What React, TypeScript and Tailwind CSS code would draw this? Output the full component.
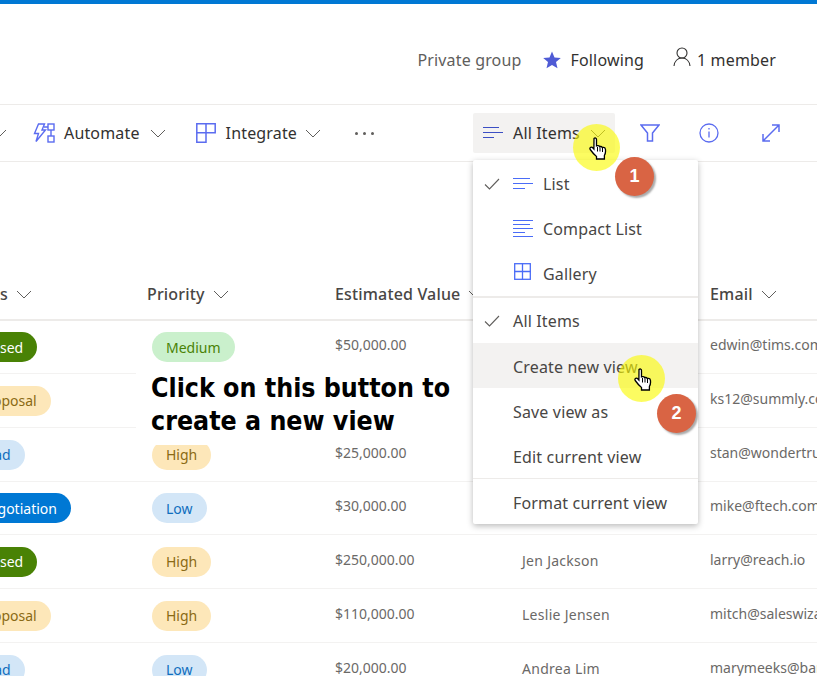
const Chev = ({ className = "" }: { className?: string }) => (
  <svg width="16" height="9" viewBox="0 0 16 9" fill="none" className={`shrink-0 ${className}`}>
    <path d="M1 1l7 7 7-7" stroke="#605e5c" strokeWidth="1" />
  </svg>
);

const Hand = () => (
  <svg width="19" height="24" viewBox="0 0 19 24">
    <path
      d="M5 1.500c1-1 2.500-.5 2.500 1V9l1-.3c.8-.2 1.500 0 1.800.5l.2.4.7-.2c.8-.2 1.500.1 1.800.7l.2.4.7-.1c1.200-.2 2.300.6 2.500 1.800.4 2.500.1 4.500-1 6.300v3.500H7.500v-2.500C5.500 18 3 15 1.200 12.500c-.6-1-.2-1.900.5-2.200.8-.3 1.700 0 2.300.7l.9 1z"
      fill="#fff"
      stroke="#000"
      strokeWidth="1.300"
    />
    <path d="M8.500 10v4.500M11 10v4.500M13.500 11v4" stroke="#000" strokeWidth="1" />
  </svg>
);

const Badge = ({ n, className }: { n: string; className: string }) => (
  <div
    className={`absolute w-[39px] h-[39px] rounded-full bg-[#d96444] text-white flex items-center justify-center font-bold text-[18px] shadow-[2px_2px_2px_#aaa] font-['Liberation_Sans',sans-serif] ${className}`}
  >
    {n}
  </div>
);

const pillStyles: Record<string, string> = {
  Closed: "bg-[#498205] text-white",
  Proposal: "bg-[#fde7b9] text-[#8a6a14]",
  Lead: "bg-[#d3e6f7] text-[#106ebe]",
  Negotiation: "bg-[#0078d4] text-white",
  High: "bg-[#fde7b9] text-[#8a6a14]",
  Medium: "bg-[#caf0cc] text-[#498205]",
  Low: "bg-[#d3e6f7] text-[#106ebe]",
};

const rows = [
  { h: "h-[53px]", s: "Closed", p: "Medium", v: "$50,000.00", n: "", e: "edwin@tims.com" },
  { h: "h-[54px]", s: "Proposal", p: "", v: "", n: "", e: "ks12@summly.com" },
  { h: "h-[54px]", s: "Lead", p: "High", v: "$25,000.00", n: "", e: "stan@wondertrust.com" },
  { h: "h-[53px]", s: "Negotiation", p: "Low", v: "$30,000.00", n: "", e: "mike@ftech.com" },
  { h: "h-[54px]", s: "Closed", p: "High", v: "$250,000.00", n: "Jen Jackson", e: "larry@reach.io" },
  { h: "h-[54px]", s: "Proposal", p: "High", v: "$110,000.00", n: "Leslie Jensen", e: "mitch@saleswizard.com" },
  { h: "h-[54px]", s: "Lead", p: "Low", v: "$20,000.00", n: "Andrea Lim", e: "marymeeks@bank.com" },
];

const Pill = ({ t, className = "" }: { t: string; className?: string }) => (
  <span className={`inline-flex h-[30px] items-center rounded-full px-[14px] text-[14px] whitespace-nowrap ${pillStyles[t]} ${className}`}>
    {t}
  </span>
);

const MenuIconList = () => (
  <svg width="21" height="12" viewBox="0 0 21 12" stroke="#4a6cf7" strokeWidth="1">
    <path d="M0 .5h17M0 5.500h20M0 10.500h12" />
  </svg>
);

const MenuIconCompact = () => (
  <svg width="21" height="18" viewBox="0 0 21 18" stroke="#4a6cf7" strokeWidth="1">
    <path d="M0 .5h20M0 4.500h17M0 8.500h20M0 12.500h12M0 16.500h20" />
  </svg>
);

const MenuIconGallery = () => (
  <svg width="19" height="17" viewBox="0 0 19 17" fill="none" stroke="#4a6cf7" strokeWidth="1.300" className="-mt-[4px]">
    <rect x="1.700" y=".7" width="15.600" height="15.600" />
    <path d="M9.500 0v17M1 8.500h17" />
  </svg>
);

const Check = () => (
  <svg width="16" height="12" viewBox="0 0 16 12" fill="none" stroke="#605e5c" strokeWidth="1.100">
    <path d="M1 6.500l4.500 4.500L15 1" />
  </svg>
);

const MenuItem = ({
  label,
  check,
  icon,
  hover,
  low,
}: {
  label: string;
  check?: boolean;
  icon?: React.ReactNode;
  hover?: boolean;
  low?: boolean;
}) => (
  <div className={`h-[45px] flex items-center text-[16px] tracking-[0.01em] text-[#484644] ${hover ? "bg-[#f3f2f1]" : ""} ${low ? "pt-[2px]" : ""}`}>
    <div className="w-[40px] flex justify-center pr-[3px] shrink-0">{check ? <Check /> : null}</div>
    {icon ? <div className="w-[30px] shrink-0 flex">{icon}</div> : null}
    <span className="whitespace-nowrap">{label}</span>
  </div>
);

export default function App() {
  return (
    <div className="relative w-[817px] h-[676px] overflow-hidden bg-white font-['Noto_Sans',sans-serif] text-[#323130]">
      <div className="h-[4px] bg-[#0078d4]" />
      <div className="h-[101px] flex items-center justify-end pr-[41px] border-b border-[#edebe9] pt-[11px] text-[16px] tracking-[0.01em]">
        <span className="text-[#605e5c]">Private group</span>
        <svg width="18" height="18" viewBox="0 0 18 18" className="ml-[21px] mr-[10px]">
          <path d="M9 .5l2.500 5.900 6.300.5-4.800 4.200 1.500 6.200L9 14.100l-5.500 3.200L5 11.100.2 6.900l6.300-.5z" fill="#4f5bd5" />
        </svg>
        <span>Following</span>
        <svg width="18" height="20" viewBox="0 0 18 20" fill="none" stroke="#323130" strokeWidth="1.100" className="ml-[29px] mr-[6px] -mt-[5px]">
          <circle cx="9" cy="6" r="5" />
          <path d="M1 19c.5-4.500 3.500-8 8-8s7.500 3.500 8 8" />
        </svg>
        <span>1 member</span>
      </div>

      <div className="h-[57px] border-b border-[#edebe9] flex items-center text-[16px] tracking-[0.01em] pr-[36px]">
        <Chev className="ml-[-9px] mr-[26px]" />
        <svg width="22" height="20" viewBox="0 0 22 20" fill="none" stroke="#5b6cf0" strokeWidth="1.400" className="mr-[9px] shrink-0">
          <path d="M5.500 1h6L9 7h3.500L3 18.500 5.500 10.500H1.500z" />
          <rect x="15" y="1" width="6" height="6" />
          <rect x="15" y="13" width="6" height="6" />
          <path d="M18 7v6M11 4h4" />
        </svg>
        <span>Automate</span>
        <Chev className="ml-[10px] mr-[30px]" />
        <svg width="20" height="20" viewBox="0 0 20 20" fill="none" stroke="#5b6cf0" strokeWidth="1.500" className="mr-[10px] shrink-0">
          <path d="M.8.800h18.400v9H10v9.400H.8z" />
          <path d="M10 .8v9M.8 9.800H10" />
        </svg>
        <span>Integrate</span>
        <Chev className="ml-[8px] mr-[34px]" />
        <span className="flex gap-[5px] items-center w-[21px]">
          <i className="w-[3px] h-[3px] rounded-full bg-[#605e5c]" />
          <i className="w-[3px] h-[3px] rounded-full bg-[#605e5c]" />
          <i className="w-[3px] h-[3px] rounded-full bg-[#605e5c]" />
        </span>
        <div className="ml-auto w-[142px] h-[40px] bg-[#f3f2f1] rounded-[2px] flex items-center pl-[10px] shrink-0">
          <svg width="21" height="12" viewBox="0 0 21 12" stroke="#3b4fc4" strokeWidth="1" className="mr-[9px] shrink-0">
            <path d="M0 .5h16M0 5.500h20M0 10.500h11" />
          </svg>
          <span className="whitespace-nowrap">All Items</span>
          <Chev className="ml-[10px]" />
        </div>
        <svg width="20" height="18" viewBox="0 0 20 18" fill="none" stroke="#5b6cf0" strokeWidth="1.500" className="ml-[25px] shrink-0">
          <path d="M1 1h18l-6.500 8v8h-5V9z" />
        </svg>
        <svg width="20" height="20" viewBox="0 0 20 20" fill="none" stroke="#5b6cf0" strokeWidth="1.300" className="ml-[39px] shrink-0">
          <circle cx="10" cy="10" r="9" />
          <path d="M10 8.500v6M10 5v1.500" />
        </svg>
        <svg width="20" height="20" viewBox="0 0 20 20" fill="none" stroke="#5b6cf0" strokeWidth="1.500" className="ml-[42px] shrink-0">
          <path d="M2 18L18 2M11 2h7v7M2 11v7h7" />
        </svg>
      </div>

      <div className="h-[108px]" />

      <div className="h-[51px] border-b-2 border-[#edebe9] flex items-center pb-[1px] text-[16px] tracking-[0.01em] text-[#484644] font-medium">
        <div className="w-[147px] shrink-0 flex items-center justify-end pr-[115px]">
          <span>s</span>
          <Chev className="ml-[8px]" />
        </div>
        <div className="w-[188px] shrink-0 flex items-center">
          <span>Priority</span>
          <Chev className="ml-[8px]" />
        </div>
        <div className="w-[187px] shrink-0 flex items-center">
          <span className="whitespace-nowrap">Estimated Value</span>
          <Chev className="ml-[8px]" />
        </div>
        <div className="w-[188px] shrink-0" />
        <div className="flex items-center">
          <span>Email</span>
          <Chev className="ml-[8px]" />
        </div>
      </div>

      {rows.map((r, i) => (
        <div key={i} className={`${r.h} border-b border-[#f3f2f1] flex items-center text-[14px] text-[#6b6967]`}>
          <div className="w-[147px] shrink-0 overflow-hidden">
            <Pill t={r.s} className="ml-[-35px]" />
          </div>
          <div className="w-[188px] shrink-0 pl-[5px]">{r.p ? <Pill t={r.p} /> : null}</div>
          <div className="w-[187px] shrink-0 -mt-[5px]">{r.v}</div>
          <div className="w-[188px] shrink-0 -mt-[3px] whitespace-nowrap tracking-[0.02em]">{r.n}</div>
          <div className="whitespace-nowrap -mt-[5px]">{r.e}</div>
        </div>
      ))}

      {/* annotation */}
      <div className="absolute left-[136px] top-[368px] w-[340px] h-[77px] bg-white pl-[15px] pt-[3px] font-['DejaVu_Sans_Condensed','DejaVu_Sans',sans-serif] [font-stretch:condensed] font-bold text-[26.500px] leading-[33px] text-black">
        Click on this button to
        <br />
        create a new view
      </div>

      {/* menu */}
      <div className="absolute left-[473px] top-[160px] w-[225px] h-[364px] bg-white shadow-[0_2px_6px_rgba(0,0,0,0.28)] rounded-[2px] pt-px">
        <MenuItem label="List" check icon={<MenuIconList />} />
        <MenuItem label="Compact List" icon={<MenuIconCompact />} />
        <MenuItem label="Gallery" icon={<MenuIconGallery />} />
        <div className="h-[2px] bg-[#edebe9]" />
        <MenuItem label="All Items" check />
        <MenuItem label="Create new view" hover low />
        <MenuItem label="Save view as" low />
        <MenuItem label="Edit current view" low />
        <div className="h-px bg-[#edebe9]" />
        <MenuItem label="Format current view" low />
      </div>

      {/* callouts */}
      <div className="absolute left-[573px] top-[124px] w-[47px] h-[47px] rounded-full bg-[rgba(250,250,0,0.62)]" />
      <div className="absolute left-[618px] top-[355px] w-[47px] h-[47px] rounded-full bg-[rgba(250,250,0,0.62)]" />
      <div className="absolute left-[589px] top-[137px]"><Hand /></div>
      <div className="absolute left-[634px] top-[368px]"><Hand /></div>
      <Badge n="1" className="left-[615px] top-[157px]" />
      <Badge n="2" className="left-[657px] top-[394px]" />
    </div>
  );
}
